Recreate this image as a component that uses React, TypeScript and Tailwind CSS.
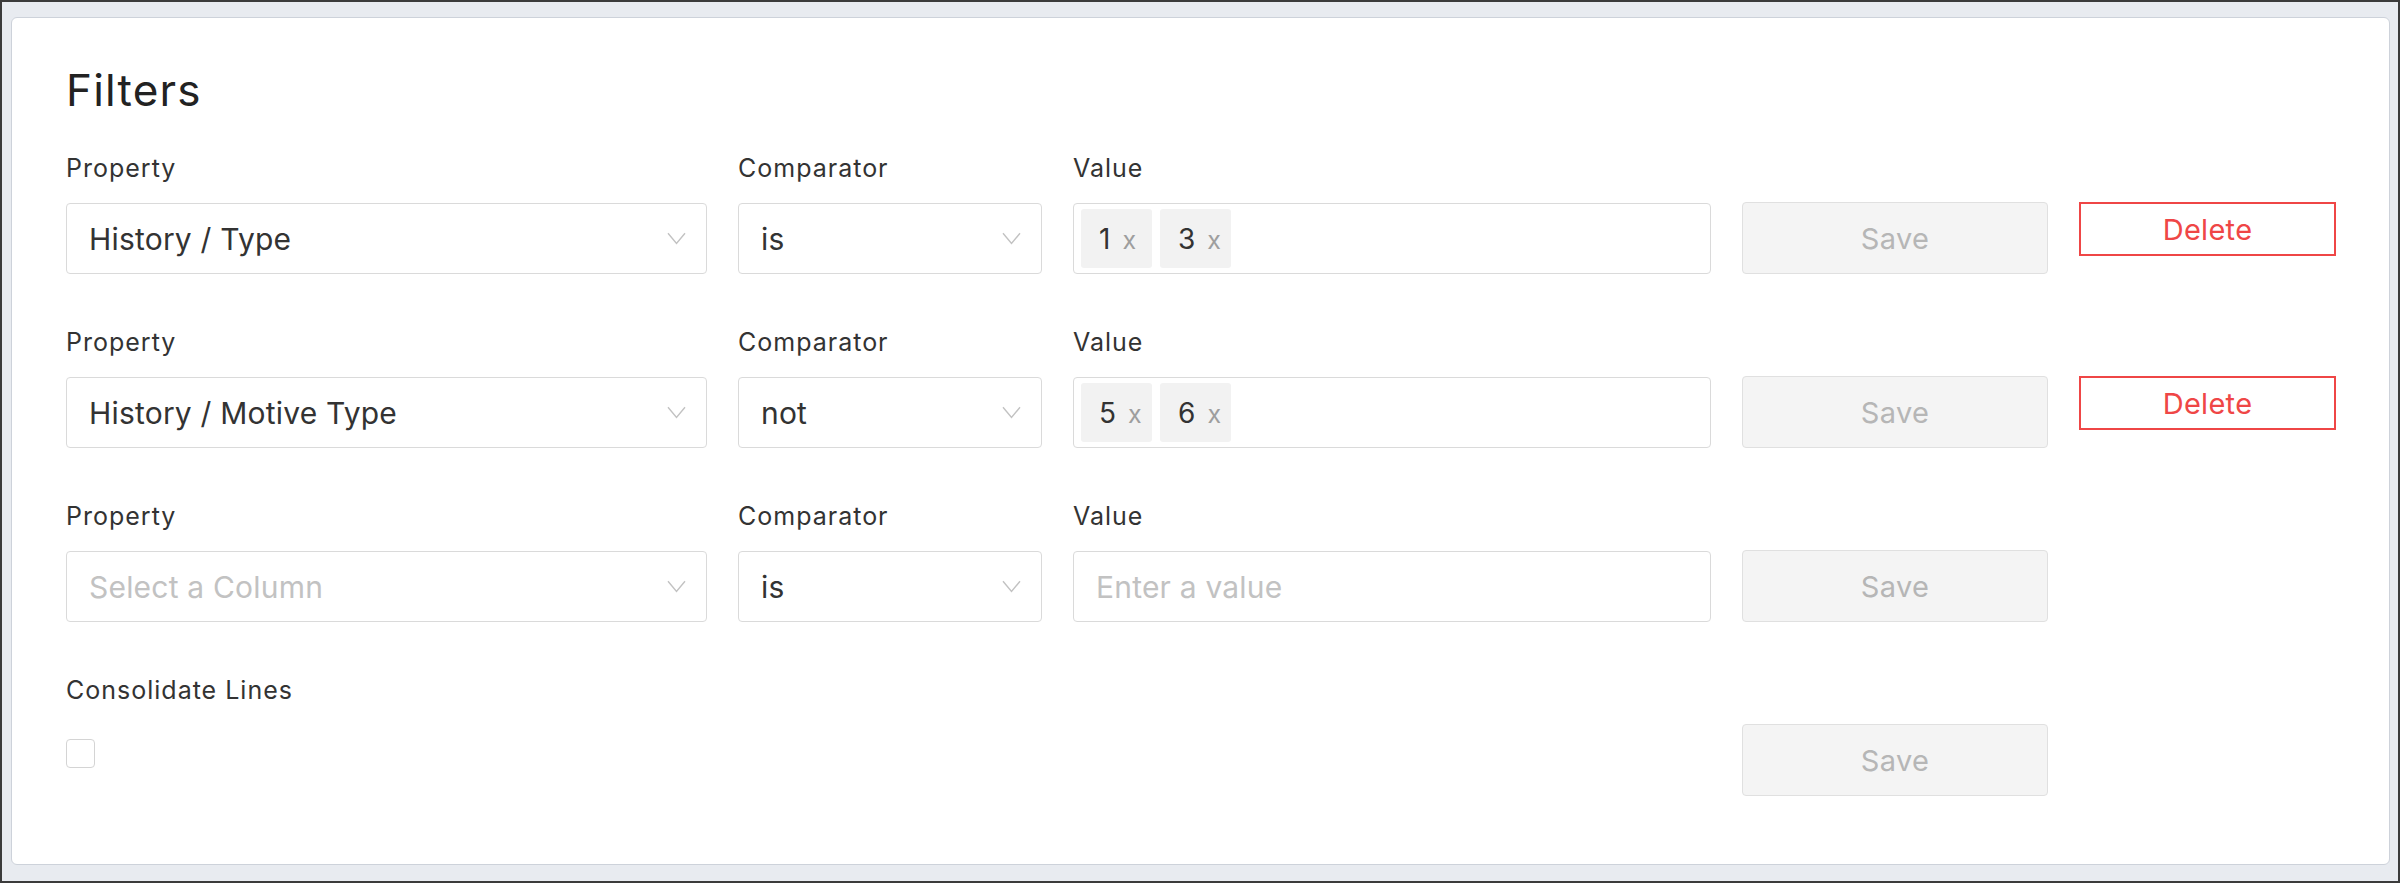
import React from "react";

function Chevron() {
  return (
    <svg width="19" height="13" viewBox="0 0 19 13" fill="none" className="shrink-0">
      <path d="M1 1.2 L9.5 11.5 L18 1.2" stroke="#c2c2c2" strokeWidth="1.4" />
    </svg>
  );
}

function Label({ children }: { children?: React.ReactNode }) {
  return (
    <div className="text-[25px] leading-[32px] tracking-[1px] text-[#333333] whitespace-nowrap">
      {children}
    </div>
  );
}

function Select({ value, placeholder }: { value?: string; placeholder?: string }) {
  return (
    <div className="flex h-[71px] items-center justify-between rounded-[4px] border border-[#dadada] bg-white pl-[22px] pr-[20px]">
      <span
        className={
          "text-[30px] leading-none tracking-[0.2px] whitespace-nowrap " +
          (value ? "text-[#333333]" : "text-[#c2c2c2]")
        }
      >
        {value ?? placeholder}
      </span>
      <Chevron />
    </div>
  );
}

function Chip({ v }: { v: string }) {
  return (
    <div className="flex h-[59px] w-[71px] items-center rounded-[3px] bg-[#f2f2f2] pl-[18px]">
      <span className="text-[28px] leading-none text-[#333333]">{v}</span>
      <span className="ml-[12px] mt-[3px] text-[25px] leading-none text-[#9e9e9e]">x</span>
    </div>
  );
}

function ValueBox({ values }: { values?: string[] }) {
  return (
    <div className="flex h-[71px] items-center gap-[8px] rounded-[4px] border border-[#dadada] bg-white pl-[7px]">
      {values && values.length > 0 ? (
        values.map((v) => <Chip key={v} v={v} />)
      ) : (
        <span className="pl-[15px] text-[30px] leading-none tracking-[0.2px] text-[#c2c2c2]">
          Enter a value
        </span>
      )}
    </div>
  );
}

function SaveButton() {
  return (
    <button
      type="button"
      className="-mt-px flex h-[72px] w-full items-center justify-center rounded-[4px] border border-[#e0e0e0] bg-[#f4f4f4] text-[29px] leading-none tracking-[0.3px] text-[#b6b6b6]"
    >
      Save
    </button>
  );
}

function DeleteButton() {
  return (
    <button
      type="button"
      className="-mt-px flex h-[54px] w-full items-center justify-center border-2 border-[#ef4646] bg-white text-[29px] leading-none tracking-[0.3px] text-[#ef4646]"
    >
      Delete
    </button>
  );
}

function FilterRow({
  prop,
  comp,
  values,
  deletable,
}: {
  prop?: string;
  comp: string;
  values?: string[];
  deletable?: boolean;
}) {
  return (
    <div className="grid grid-cols-[641px_304px_638px_306px_257px] gap-x-[31px] gap-y-[19px] items-start">
      <Label>Property</Label>
      <Label>Comparator</Label>
      <Label>Value</Label>
      <div />
      <div />
      <Select value={prop} placeholder="Select a Column" />
      <Select value={comp} />
      <ValueBox values={values} />
      <SaveButton />
      {deletable ? <DeleteButton /> : <div />}
    </div>
  );
}

export default function App() {
  return (
    <div className="box-border h-[883px] w-full border-2 border-[#3b3b3b] bg-[#e8ebf0] pl-[9px] pr-[8px] pt-[15px] font-['Inter',sans-serif]">
      <div className="rounded-[6px] border border-[#cdd2da] bg-white pl-[54px] pt-[50px] pb-[68px]">
        <h1 className="mb-[40px] text-[44px] leading-[44px] font-normal tracking-[1.2px] text-[#222222]">
          Filters
        </h1>
        <div className="flex flex-col gap-[52px]">
          <FilterRow prop="History / Type" comp="is" values={["1", "3"]} deletable />
          <FilterRow prop="History / Motive Type" comp="not" values={["5", "6"]} deletable />
          <FilterRow comp="is" />
          <div className="grid grid-cols-[641px_304px_638px_306px_257px] gap-x-[31px] gap-y-[19px] items-start">
            <Label>Consolidate Lines</Label>
            <div />
            <div />
            <div />
            <div />
            <div className="pt-[14px]">
              <div className="h-[29px] w-[29px] rounded-[4px] border border-[#d4d4d4] bg-white" />
            </div>
            <div />
            <div />
            <div className="h-[71px]">
              <SaveButton />
            </div>
            <div />
          </div>
        </div>
      </div>
    </div>
  );
}
